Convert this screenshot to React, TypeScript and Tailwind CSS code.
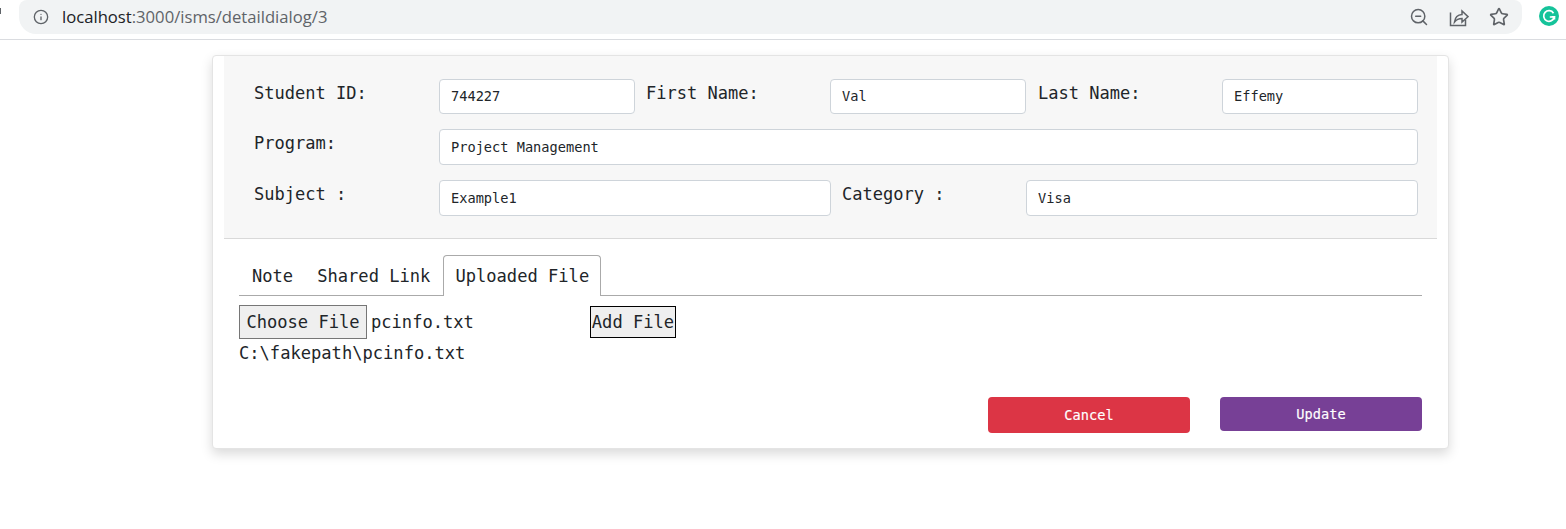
import React from "react";
import { Info, Star, ZoomOut } from "lucide-react";

const mono = "font-['DejaVu_Sans_Mono','Liberation_Mono',monospace]";

function Label({ text, width }: { text: string; width: string }) {
  return <div className={`${width} shrink-0 text-[17.05px] leading-[20px] pt-[4px] text-[#212529]`}>{text}</div>;
}

function Field({ value, className }: { value: string; className: string }) {
  return (
    <input
      readOnly
      value={value}
      className={`${className} ${mono} rounded-[4px] border border-[#ced4da] bg-white pl-[11px] pr-[11px] pb-[1px] text-[13.65px] text-[#212529] outline-none`}
    />
  );
}

export default function App() {
  return (
    <div className={`min-h-[529px] w-[1566px] overflow-hidden bg-white ${mono}`}>
      <header className="flex h-[40px] items-start border-b border-[#dadce0] bg-white">
        <div className="mt-[8px] h-[6px] w-[1px] bg-[#5f6368]" />
        <div className="ml-[18px] flex h-[34px] w-[1503px] items-center rounded-b-[17px] rounded-t-[8px] bg-[#f1f3f4] pl-[14px] pr-[13px] font-['Open_Sans',sans-serif] text-[16.65px]">
          <Info size={16} strokeWidth={2} className="text-[#5f6368]" />
          <span className="ml-[13px] text-[#202124]">localhost</span>
          <span className="text-[#5f6368]">:3000/isms/detaildialog/3</span>
          <div className="ml-auto flex items-center gap-[20px] text-[#5f6368]">
            <ZoomOut size={20} strokeWidth={1.8} />
            <svg width="20" height="20" viewBox="0 0 20 20" fill="none" stroke="currentColor" strokeWidth="1.5">
              <path d="M1.5 5.5v13h15v-6" />
              <path d="M5.5 15c.6-4.5 3.6-7.2 7.5-7.4V4l6 5.7-6 5.3v-3.6c-3.3 0-5.7 1.2-7.5 3.6Z" />
            </svg>
            <Star size={20} strokeWidth={2} />
          </div>
        </div>
        <svg className="ml-[17px] mt-[6px]" width="20" height="20" viewBox="0 0 20 20">
          <circle cx="10" cy="10" r="10" fill="#15c39a" />
          <path d="M14.5 7.2A5.3 5.3 0 1 0 15.2 11h-4.4" fill="none" stroke="#fff" strokeWidth="1.7" />
          <path d="M15.6 13.6v-3h-3" fill="none" stroke="#fff" strokeWidth="1.4" />
        </svg>
      </header>

      <main className="ml-[212px] mt-[15px] h-[394px] w-[1237px] rounded-[4px] border border-[#e4e4e4] bg-white px-[11px] shadow-[0_5px_12px_rgba(0,0,0,0.15)]">
        <section className="flex h-[183px] flex-col gap-[15px] border-b border-[#d9d9d9] bg-[#f7f7f7] pl-[30px] pr-[19px] pt-[23px]">
          <div className="flex h-[35px] items-start">
            <Label text="Student ID:" width="w-[185px]" />
            <Field value="744227" className="h-[35px] w-[196px]" />
            <div className="w-[11px] shrink-0" />
            <Label text="First Name:" width="w-[184px]" />
            <Field value="Val" className="h-[35px] w-[196px]" />
            <div className="w-[12px] shrink-0" />
            <Label text="Last Name:" width="w-[184px]" />
            <Field value="Effemy" className="h-[35px] w-[196px]" />
          </div>
          <div className="flex h-[36px] items-start">
            <Label text="Program:" width="w-[185px]" />
            <Field value="Project Management" className="h-[36px] w-[979px]" />
          </div>
          <div className="flex h-[36px] items-start">
            <Label text="Subject :" width="w-[185px]" />
            <Field value="Example1" className="h-[36px] w-[392px]" />
            <div className="w-[11px] shrink-0" />
            <Label text="Category :" width="w-[184px]" />
            <Field value="Visa" className="h-[36px] w-[392px]" />
          </div>
        </section>

        <section className="px-[15px] pt-[16px]">
          <nav className="flex h-[41px] items-end border-b border-[#aaaaaa] text-[17.1px] text-[#212529]">
            <div className="flex h-[40px] items-center pl-[13px] pr-[12px] pt-[4px]">Note</div>
            <div className="flex h-[40px] items-center pl-[12px] pr-[13px] pt-[4px]">Shared Link</div>
            <div className="-mb-px flex h-[41px] items-center rounded-t-[4px] border border-b-0 border-[#aaaaaa] bg-white px-[11px] pt-[2px]">
              Uploaded File
            </div>
          </nav>
          <div className="mt-[9px] flex h-[34px] items-start text-[17.1px] text-[#212529]">
            <div className="flex h-[34px] w-[128px] items-center justify-center border border-[#767676] bg-[#efefef] pt-[2px]">Choose File</div>
            <span className="ml-[4px] w-[219px] pt-[7px] leading-[20px]">pcinfo.txt</span>
            <div className="mt-[1px] flex h-[32px] w-[86px] items-center justify-center border border-black bg-[#efefef] pt-[2px] whitespace-nowrap">Add File</div>
          </div>
          <div className="mt-[4px] text-[17.1px] leading-[20px] text-[#212529]">C:\fakepath\pcinfo.txt</div>
        </section>

        <section className="mt-[34px] flex items-start justify-end gap-[30px] pr-[15px] text-[13.65px] text-white [-webkit-text-stroke:0.15px_white]">
          <button className="flex h-[36px] w-[202px] items-center justify-center rounded-[4px] bg-[#dc3545]">Cancel</button>
          <button className="flex h-[34px] w-[202px] items-center justify-center rounded-[4px] bg-[#774096]">Update</button>
        </section>
      </main>
    </div>
  );
}
